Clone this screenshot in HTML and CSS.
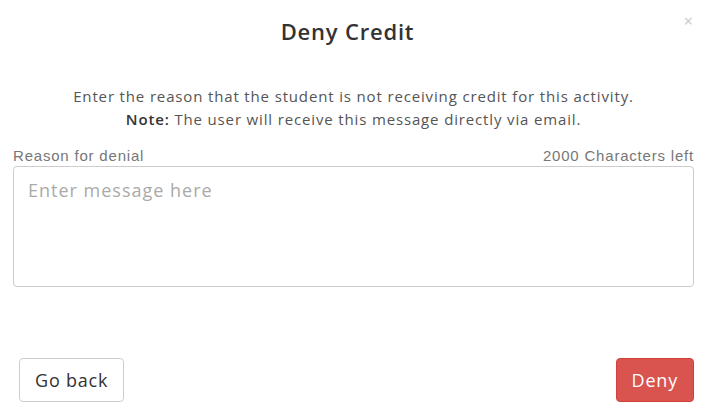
FILE: index.html
```html
<!DOCTYPE html>
<html lang="en">
<head>
    <meta charset="UTF-8">
    <title>Deny Credit</title>
    <link rel="stylesheet" href="styles.css">
</head>
<body>
    <div class="modal">
        <div class="modal-header">
            <h2>Deny Credit</h2>
            <span class="close">&times;</span>
        </div>
        <div class="modal-body">
            <p class="intro">Enter the reason that the student is not receiving credit for this activity.<br>
            <b>Note:</b> The user will receive this message directly via email.</p>
            <div class="field-head">
                <span>Reason for denial</span>
                <span>2000 Characters left</span>
            </div>
            <textarea placeholder="Enter message here" maxlength="2000"></textarea>
        </div>
        <div class="modal-footer">
            <button class="btn">Go back</button>
            <button class="btn btn-deny">Deny</button>
        </div>
    </div>
</body>
</html>
```

FILE: styles.css
```css
body {
    margin: 0;
    background-color: #fff;
    font-family: "Open Sans", "Noto Sans", sans-serif;
    color: #333;
}

.modal {
    width: 710px;
    height: 415px;
    display: flex;
    flex-direction: column;
    box-sizing: border-box;
}

.modal-header {
    position: relative;
    text-align: center;
    padding: 16px 15px 0 0;
    height: 57px;
    box-sizing: border-box;
}

.modal-header h2 {
    margin: 0;
    font-size: 22px;
    font-weight: 600;
    line-height: 30px;
    letter-spacing: 0.8px;
    color: #333;
}

.close {
    position: absolute;
    right: 17px;
    top: 10px;
    font-size: 16px;
    color: #c8c8c8;
}

.modal-body {
    padding: 0 16px 0 13px;
}

.intro {
    margin: 28px 0 0;
    text-align: center;
    font-size: 15px;
    line-height: 23px;
    letter-spacing: 0.85px;
    color: #555;
}

.intro b {
    color: #333;
    font-weight: 600;
}

.field-head {
    display: flex;
    justify-content: space-between;
    margin-top: 15px;
    font-family: "Liberation Sans", Arial, sans-serif;
    font-size: 15px;
    letter-spacing: 0.8px;
    color: #777;
    line-height: 19px;
}

textarea {
    display: block;
    width: 100%;
    height: 121px;
    margin-top: 1px;
    box-sizing: border-box;
    border: 1px solid #ccc;
    border-radius: 4px;
    padding: 11px 14px;
    font-family: "Open Sans", "Noto Sans", sans-serif;
    font-size: 18px;
    letter-spacing: 1px;
    resize: none;
}

textarea::placeholder {
    color: #aaa;
}

.modal-footer {
    display: flex;
    justify-content: space-between;
    padding: 71px 16px 0 19px;
}

.btn {
    height: 44px;
    padding: 0 15px;
    border: 1px solid #ccc;
    border-radius: 4px;
    background-color: #fff;
    font-family: "Open Sans", "Noto Sans", sans-serif;
    font-size: 18px;
    letter-spacing: 0.8px;
    color: #333;
}

.btn-deny {
    background-color: #d9534f;
    border-color: #d43f3a;
    color: #fff;
}
```
